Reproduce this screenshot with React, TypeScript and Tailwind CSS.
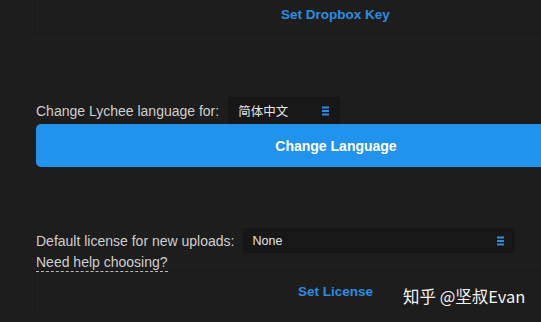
import React from "react";

const Bars = () => (
  <svg width="7" height="10" viewBox="0 0 7 10" className="shrink-0">
    <rect x="0" y="0.5" width="7" height="2" fill="#2a8fe6" />
    <rect x="0" y="4" width="7" height="2" fill="#2a8fe6" />
    <rect x="0" y="7.5" width="7" height="2" fill="#2a8fe6" />
  </svg>
);

const App = () => {
  return (
    <div
      className="relative w-[541px] h-[322px] overflow-hidden bg-[#1d1d1d] text-[14px] leading-[18px] text-[#cfcfcf]"
      style={{ fontFamily: '"Liberation Sans", Arial, sans-serif' }}
    >
      <div className="pl-[34px] w-[636px]">
        {/* dropbox box */}
        <div className="h-[34px] border-l border-b border-[#191919] flex justify-center pt-[6px]">
          <span className="font-bold text-[13.5px] text-[#2b8de0]">Set Dropbox Key</span>
        </div>

        {/* language */}
        <div className="pl-[2px] mt-[63px] flex items-center">
          <span>Change Lychee language for:</span>
          <div className="ml-[9px] w-[112px] h-[27px] bg-[#171717] rounded-[2px] flex items-center justify-between pl-[10px] pr-[11px]">
            <span
              className="text-[12.5px] text-[#e4e4e4]"
              style={{ fontFamily: '"Noto Sans CJK SC", sans-serif' }}
            >
              简体中文
            </span>
            <Bars />
          </div>
        </div>
        <div className="ml-[2px] h-[43px] w-[600px] rounded-[5px] bg-[#2293ec] flex items-center justify-center font-bold text-white">
          Change Language
        </div>

        {/* license */}
        <div className="pl-[2px] mt-[61px] flex items-center">
          <span>Default license for new uploads:</span>
          <div className="ml-[9px] w-[272px] h-[25px] bg-[#171717] rounded-[2px] flex items-center justify-between pl-[9px] pr-[11px]">
            <span className="text-[12.5px] text-[#e4e4e4]">None</span>
            <Bars />
          </div>
        </div>
        <div className="pl-[2px] mt-[1px] leading-[16px]">
          <span className="border-b border-dashed border-[#bbbbbb] pb-[1px]">
            Need help choosing?
          </span>
        </div>
        <div className="h-[48px] border-l border-t border-[#191919] flex justify-center pt-[12px]">
          <span className="font-bold text-[13.5px] text-[#2b8de0]">Set License</span>
        </div>
      </div>

      {/* watermark */}
      <div
        className="absolute left-[403px] top-[287px] text-[16.5px] text-[#f2f2f2]"
        style={{ fontFamily: '"Noto Sans CJK SC", sans-serif' }}
      >
        知乎 @坚叔Evan
      </div>
    </div>
  );
};

export default App;
